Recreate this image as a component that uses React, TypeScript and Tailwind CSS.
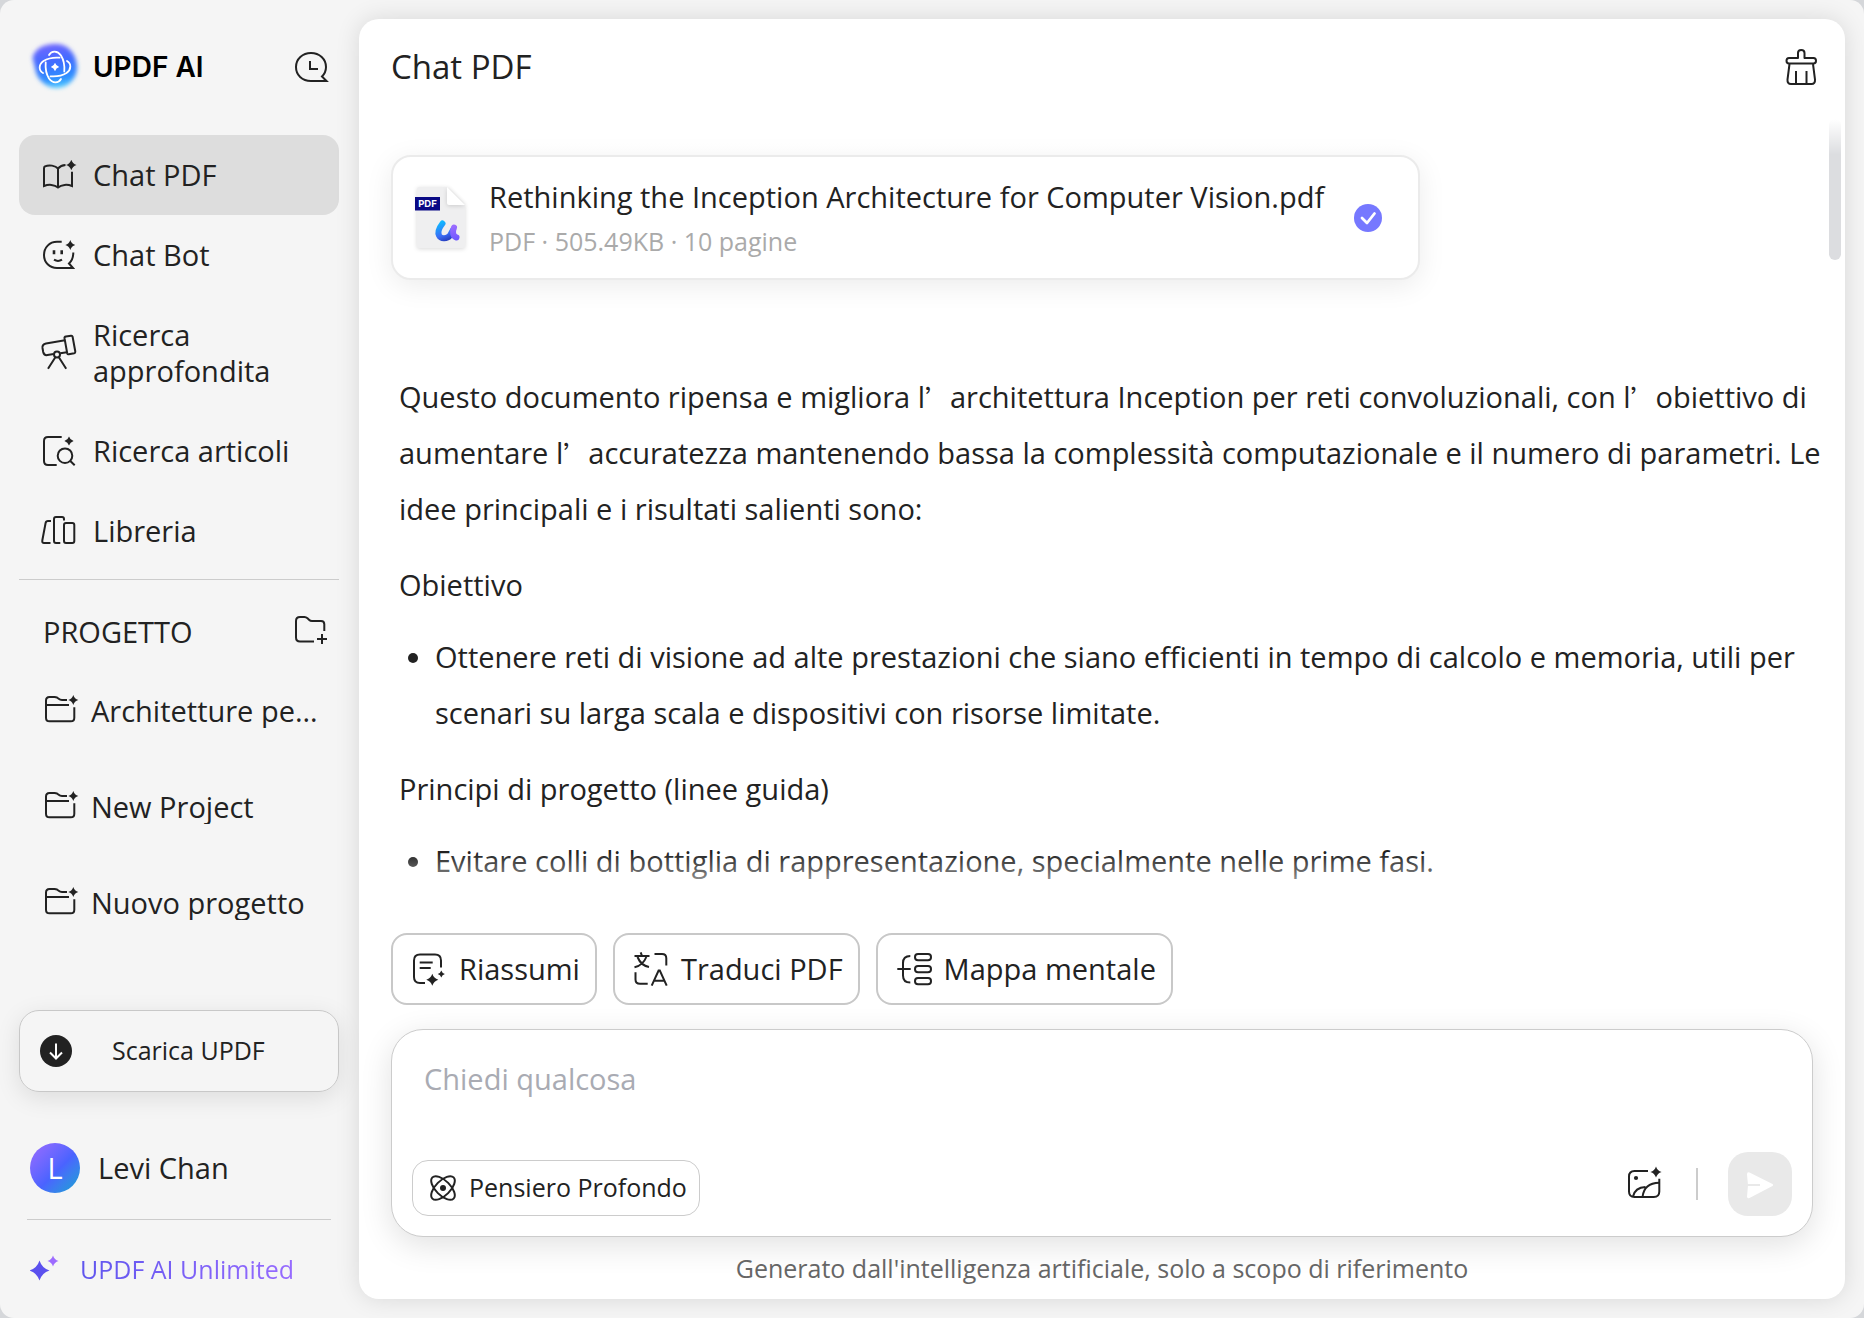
import React, { ReactNode } from 'react';
import clsx from 'clsx';

interface IconProps {
  className?: string;
  children?: ReactNode;
}

// Shared 36px line icon frame
const Icon: React.FC<IconProps> = ({ className, children }) => (
  <svg
    className={clsx('h-9 w-9 shrink-0 overflow-visible', className)}
    viewBox="0 0 36 36"
    fill="none"
    stroke="currentColor"
    strokeWidth={2}
    aria-hidden="true"
  >
    {children}
  </svg>
);

interface SparkProps {
  x: number;
  y: number;
  r: number;
  fill?: string;
}

// Four pointed star used on most of the AI icons
const Spark: React.FC<SparkProps> = ({ x, y, r, fill = 'currentColor' }) => {
  const w = r * 0.24;
  return (
    <path
      d={`M${x} ${y - r}Q${x + w} ${y - w} ${x + r} ${y}Q${x + w} ${y + w} ${x} ${y + r}Q${x - w} ${y + w} ${x - r} ${y}Q${x - w} ${y - w} ${x} ${y - r}Z`}
      fill={fill}
      stroke="none"
    />
  );
};

const LogoIcon = () => (
  <svg className="h-13 w-13 shrink-0 overflow-visible" viewBox="0 0 52 52" fill="none" aria-hidden="true">
    <defs>
      <linearGradient id="logo-fill" x1="20" y1="2" x2="28" y2="50" gradientUnits="userSpaceOnUse">
        <stop offset="0" stopColor="#7466ff" />
        <stop offset="0.4" stopColor="#3f6cff" />
        <stop offset="0.75" stopColor="#2f90ff" />
        <stop offset="1" stopColor="#5fe0ff" />
      </linearGradient>
      <filter id="logo-blur" x="-20%" y="-20%" width="140%" height="140%">
        <feGaussianBlur stdDeviation="2" />
      </filter>
    </defs>
    <path
      d="M4 15C8 5 18 3 27 3C38 3 46 11 47.500 22C49.500 32 45 39 39 43.500C33 48 22 48.500 15.500 43C9 38 7 33 6 27C5 21 3 18 4 15Z"
      fill="url(#logo-fill)"
      filter="url(#logo-blur)"
    />
    <g transform="translate(26 26)" stroke="#fff" strokeWidth="1.8" strokeLinecap="round">
      {[0, 90, 180, 270].map((angle) => (
        <path key={angle} transform={`rotate(${angle})`} d="M-6 -12C-3.500 -16.500 2.500 -16.500 6 -11.500C8.500 -7.500 9.800 -2 9.300 4.500" />
      ))}
    </g>
    <Spark x={26} y={26} r={4.2} fill="#fff" />
  </svg>
);

const HistoryIcon = () => (
  <Icon>
    <path d="M18 32C9 32 3 26 3 18C3 10 9.5 4 18 4C26.5 4 33 10 33 18C33 22 31.5 25 29 27.5L33.5 32H18Z" />
    <path d="M17 12V20H25" />
  </Icon>
);

const BookIcon = () => (
  <Icon>
    <path d="M24.5 8C21 8.2 19 9.2 17 11.5C14.5 8.6 8 7.4 4 9.4Q3 10 3 11.2V29C7.500 27.2 13.500 27.400 17 30.5C20.5 27.4 26.5 27.2 31 29V14.7M17 11.5V30.5" />
    <Spark x={30.3} y={8} r={5.2} />
  </Icon>
);

const BotIcon = () => (
  <Icon>
    <path d="M20.7 4.8H16C8.500 4.800 3 10.500 3 18C3 25.500 8.500 31 16 31H32L28 26.500C30.800 24 32.300 20 32.300 15.500" />
    <path d="M13 13.300V17.300M20.700 13.300V17.300" strokeWidth={2.6} />
    <path d="M13 22.700Q17 25.300 21 22.700" />
    <Spark x={29.3} y={8} r={5} />
  </Icon>
);

const TelescopeIcon = () => (
  <Icon>
    <path d="M24 5.300L5 8.500Q1 9.300 1.500 13L2.200 17Q3 20.700 6.500 20.100L12.700 19M19.300 18.300L26 17.200" />
    <path d="M24.900 1.500L30 .7Q31.300 .5 31.600 1.700L34.300 16.500Q34.500 18 33.200 18.300L27.800 19.300Q26.500 19.500 26.200 18.200L23.500 3.200Q23.300 1.800 24.900 1.500Z" />
    <circle cx="16" cy="19.500" r="3" />
    <path d="M14.200 22.500L7 33.700M18 22.500L25.200 33.700" />
  </Icon>
);

const ArticleSearchIcon = () => (
  <Icon>
    <path d="M20.700 4H7Q3 4 3 8V28Q3 32 7 32H15.700" />
    <circle cx="24" cy="22.700" r="7.300" />
    <path d="M29.300 28L33.700 32.300" />
    <Spark x={28} y={8} r={4.6} />
  </Icon>
);

const LibraryIcon = () => (
  <Icon>
    <path d="M10 8H7Q5 8 4.600 10L1.300 27.500Q1 30 3 30H9.500" />
    <path d="M19.300 30H15Q13 30 13 28V6Q13 4 15 4H21Q23 4 23 6V7.500" />
    <rect x="23" y="10" width="10.300" height="20" rx="2" />
  </Icon>
);

const FolderPlusIcon = () => (
  <Icon>
    <path d="M21 27.500H7Q3 27.500 3 23.500V7Q3 3 7 3H11.500Q13 3 14.500 4.300L16 5.700Q17.300 7 19 7H28Q31.300 7 31.300 10.300V17" />
    <path d="M29 20V30M24 25H34" />
  </Icon>
);

const FolderIcon = () => (
  <Icon>
    <path d="M26 12H3M24 6.900H19Q17 6.900 15.700 5.800L14.300 4.700Q13 3.900 11.500 3.900H6.500Q3 3.900 3 7.500V24.700Q3 28.300 6.500 28.300H27.800Q31.300 28.300 31.300 24.700V14.300" />
    <Spark x={30.3} y={7} r={5} />
  </Icon>
);

const BroomIcon = () => (
  <Icon>
    <path d="M15 9V4Q15 1 18.200 1Q21.500 1 21.500 4V9H30.500Q33 9 33 11.800Q33 14.600 30.500 14.600H6Q3.500 14.600 3.500 11.800Q3.500 9 6 9Z" strokeLinejoin="round" />
    <path d="M6.500 15L4.500 30.500Q4.200 35 8 35H28.500Q32.300 35 32 30.500L30 15M13 22V35M23.500 22V35" />
  </Icon>
);

const SummaryIcon = () => (
  <Icon>
    <path d="M14 32H9Q3 32 3 26V9.500Q3 3.500 9 3.500H24Q30 3.500 30 9.500V16.500" />
    <path d="M8.700 11.500H21.700M8.700 17H19.700" />
    <Spark x={21.3} y={28.7} r={6} />
    <Spark x={30.3} y={23} r={3.6} />
  </Icon>
);

const TranslateIcon = () => (
  <Icon>
    <path d="M1.500 5H16.500M7.700 1.300L9 5M4.500 6Q8 14.500 16 16M13.300 6Q10 14.500 1.500 16.300" />
    <path d="M21.500 3H29Q33.300 3 33.300 7.300V14.500M2.500 21.300V28.500Q2.500 32.800 7 32.800H14.700" />
    <path d="M18.700 34.700L25.600 19.500H26.800L33.700 34.700M21 29.700H31.500" />
  </Icon>
);

const MindMapIcon = () => (
  <Icon>
    <path d="M1.300 18H14.700M14.300 5Q7 5 7 12V24.500Q7 31.500 14.300 31.500" />
    <rect x="19" y="3" width="16" height="6.300" rx="3" />
    <rect x="19" y="15" width="16" height="6.300" rx="3" />
    <rect x="19" y="27" width="16" height="6.300" rx="3" />
  </Icon>
);

const AtomIcon = () => (
  <svg className="h-7 w-7 shrink-0" viewBox="0 0 28 28" fill="none" stroke="currentColor" strokeWidth={2} aria-hidden="true">
    <ellipse cx="14" cy="14" rx="15" ry="7.300" transform="rotate(45 14 14)" />
    <ellipse cx="14" cy="14" rx="15" ry="7.300" transform="rotate(-45 14 14)" />
    <circle cx="14" cy="14" r="3" fill="currentColor" stroke="none" />
  </svg>
);

const ImageIcon = () => (
  <Icon>
    <path d="M21 5H7.500Q2 5 2 10.500V25.500Q2 31 7.500 31H26.800Q32.300 31 32.300 25.500V12.700" />
    <path d="M15.500 31Q17 17 32.300 16.700M6 30.500Q8 21.500 18.500 21" />
    <circle cx="9" cy="12" r="2.100" fill="currentColor" stroke="none" />
    <Spark x={29} y={6} r={5.6} />
  </Icon>
);

const SendIcon = () => (
  <svg className="h-9 w-9" viewBox="0 0 36 36" aria-hidden="true">
    <path d="M7.500 6.500L30.500 18Q32 19 30.500 20L7.500 32Q5 33 5 30.500L6 19L5 8.500Q5 5.500 7.500 6.500Z" fill="#fff" />
    <path d="M5 19H18" stroke="#e9e9e9" strokeWidth="2" />
  </svg>
);

const PdfFileIcon = () => (
  <svg className="h-18 w-14 shrink-0 overflow-visible" viewBox="0 0 56 72" fill="none" aria-hidden="true">
    <defs>
      <linearGradient id="u-left" x1="28" y1="40" x2="36" y2="60" gradientUnits="userSpaceOnUse">
        <stop offset="0" stopColor="#0fb8ff" />
        <stop offset="0.6" stopColor="#3b6df5" />
        <stop offset="1" stopColor="#1f2fae" />
      </linearGradient>
      <linearGradient id="u-right" x1="41" y1="44" x2="45" y2="59" gradientUnits="userSpaceOnUse">
        <stop offset="0" stopColor="#9a6cff" />
        <stop offset="1" stopColor="#6a55ff" />
      </linearGradient>
    </defs>
    <path
      className="drop-shadow-sm"
      d="M6 5H34L52 23V64Q52 66 50 66H6Q4 66 4 64V7Q4 5 6 5Z"
      fill="#efeff0"
    />
    <path className="drop-shadow-sm" d="M34 5L52 23H36Q34 23 34 21Z" fill="#fff" />
    <rect x="2" y="15" width="25" height="13.500" fill="#0a0a85" />
    <text x="14.500" y="25.200" textAnchor="middle" fontSize="9.500" fontWeight="700" fontFamily="Inter, sans-serif" fill="#fff">
      PDF
    </text>
    <path d="M29.500 41.500C26 46 24.500 50.500 26 53.500C28 57.500 34 57 37 53.500L40 48" stroke="url(#u-left)" strokeWidth="6" strokeLinecap="round" />
    <path d="M41 45.500C39 50 40 54.500 43.500 55.500" stroke="url(#u-right)" strokeWidth="6" strokeLinecap="round" />
  </svg>
);

const navItems = [
  { label: 'Chat PDF', icon: <BookIcon />, active: true },
  { label: 'Chat Bot', icon: <BotIcon /> },
  { label: 'Ricerca approfondita', icon: <TelescopeIcon /> },
  { label: 'Ricerca articoli', icon: <ArticleSearchIcon /> },
  { label: 'Libreria', icon: <LibraryIcon /> },
];

const projects = ['Architetture per reti', 'New Project', 'Nuovo progetto'];

const actions = [
  { label: 'Riassumi', icon: <SummaryIcon /> },
  { label: 'Traduci PDF', icon: <TranslateIcon /> },
  { label: 'Mappa mentale', icon: <MindMapIcon /> },
];

// Typographic apostrophe set in the full-width CJK face
const Apostrophe = () => (
  <span className="font-['Noto_Sans_CJK_SC',sans-serif] text-[25px] leading-none">’</span>
);

const Sidebar = () => (
  <aside className="flex w-[359px] shrink-0 flex-col pr-5 pl-[19px]">
    <div className="flex h-[135px] items-center px-[10px] pb-[2px]">
      <LogoIcon />
      <h1 className="ml-3 flex-1 font-['Inter',sans-serif] text-[28px] leading-9 font-semibold text-black">UPDF AI</h1>
      <button type="button" aria-label="Cronologia">
        <HistoryIcon />
      </button>
    </div>

    <nav>
      {navItems.map((item) => (
        <a
          key={item.label}
          href="#"
          className={clsx(
            'flex items-center gap-4 rounded-2xl px-[22px] py-[22px] leading-9',
            item.active && 'bg-[#dddddd]'
          )}
        >
          {item.icon}
          <span>{item.label}</span>
        </a>
      ))}
    </nav>

    <section className="mt-2 border-t border-[#cccccc]">
      <div className="flex h-[83px] items-center justify-between pt-5 pr-[10px] pl-6">
        <h2 className="leading-9">PROGETTO</h2>
        <button type="button" aria-label="Nuovo progetto">
          <FolderPlusIcon />
        </button>
      </div>
      <ul>
        {projects.map((name) => (
          <li key={name}>
            <a href="#" className="flex h-24 items-center gap-3 pr-5 pl-6">
              <FolderIcon />
              <span className="truncate leading-[34px]">{name}</span>
            </a>
          </li>
        ))}
      </ul>
    </section>

    <div className="mt-auto pb-[22px]">
      <button
        type="button"
        className="flex h-[82px] w-full items-center rounded-[20px] border border-[#c8c8c8] pl-5 text-[25px] shadow-[0_6px_24px_rgba(0,0,0,0.1)]"
      >
        <svg className="h-8 w-8" viewBox="0 0 32 32" fill="none" aria-hidden="true">
          <circle cx="16" cy="16" r="16" fill="#222" />
          <path d="M16 8.500V23M10 17.500L16 23.500L22 17.500" stroke="#fff" strokeWidth="2" />
        </svg>
        <span className="ml-10">Scarica UPDF</span>
      </button>

      <div className="mt-[51px] flex items-center pl-[11px]">
        <span className="flex h-[50px] w-[50px] items-center justify-center rounded-full bg-linear-135 from-[#9a6bff] via-[#4a63ff] via-55% to-[#00a3cf] text-white">
          L
        </span>
        <span className="ml-[18px] leading-9">Levi Chan</span>
      </div>

      <a href="#" className="mx-2 mt-[26px] flex h-[77px] items-end border-t border-[#cccccc] pb-[9px] pl-[3px] text-[25px] leading-9">
        <svg className="mb-1 h-8 w-8 shrink-0" viewBox="0 0 32 32" aria-hidden="true">
          <Spark x={9.5} y={19.5} r={10} fill="#5b50ee" />
          <Spark x={23} y={10} r={5.5} fill="#9d6bff" />
        </svg>
        <span className="ml-[18px] bg-linear-to-r from-[#5f55ee] to-[#976bff] bg-clip-text whitespace-nowrap text-transparent">
          UPDF AI Unlimited
        </span>
      </a>
    </div>
  </aside>
);

const FileCard = () => (
  <article className="flex h-[125px] w-fit max-w-full items-center rounded-[20px] border-2 border-[#ebebeb] bg-white pr-9 pl-5 shadow-[0_6px_28px_rgba(0,0,0,0.08)]">
    <PdfFileIcon />
    <div className="ml-5 pt-[2px]">
      <h3 className="leading-11">Rethinking the Inception Architecture for Computer Vision.pdf</h3>
      <p className="text-[25px] leading-11 text-[#aaaaaa]">PDF · 505.49KB · 10 pagine</p>
    </div>
    <svg className="ml-[30px] h-7 w-7 shrink-0" viewBox="0 0 28 28" fill="none" aria-hidden="true">
      <circle cx="14" cy="14" r="14" fill="#7678ff" />
      <path d="M8 14L13 19L20.500 9.500" stroke="#fff" strokeWidth="2.800" strokeLinecap="round" strokeLinejoin="round" />
    </svg>
  </article>
);

const Message = () => (
  <div className="mt-[89px] pl-2 leading-14">
    <p>
      Questo documento ripensa e migliora l<Apostrophe />architettura Inception per reti convoluzionali, con l
      <Apostrophe />obiettivo di aumentare l<Apostrophe />accuratezza mantenendo bassa la complessità computazionale e
      il numero di parametri. Le idee principali e i risultati salienti sono:
    </p>
    <p className="mt-5">Obiettivo</p>
    <ul className="mt-4 list-disc pl-9">
      <li>
        Ottenere reti di visione ad alte prestazioni che siano efficienti in tempo di calcolo e memoria, utili per
        scenari su larga scala e dispositivi con risorse limitate.
      </li>
    </ul>
    <p className="mt-5">Principi di progetto (linee guida)</p>
    <ul className="mt-4 list-disc pl-9">
      <li>Evitare colli di bottiglia di rappresentazione, specialmente nelle prime fasi.</li>
    </ul>
  </div>
);

const Composer = () => (
  <form className="mx-8 rounded-[32px] border border-[#cccccc] bg-white px-5 pt-[27px] pb-5 shadow-[0_8px_32px_rgba(0,0,0,0.12)]">
    <textarea
      aria-label="Chiedi qualcosa"
      placeholder="Chiedi qualcosa"
      className="block h-[95px] w-full resize-none px-3 leading-11 outline-none placeholder:text-[#a9abb3]"
    />
    <div className="flex items-end">
      <button type="button" className="flex h-14 items-center gap-3 rounded-2xl border border-[#cccccc] pr-3 pl-4 text-[25px]">
        <AtomIcon />
        Pensiero Profondo
      </button>
      <div className="ml-auto flex h-16 items-center">
        <button type="button" aria-label="Immagine">
          <ImageIcon />
        </button>
        <span className="ml-[33px] h-8 w-0.5 bg-[#cccccc]" />
        <button
          type="submit"
          aria-label="Invia"
          className="ml-[30px] flex h-16 w-16 items-center justify-center rounded-[20px] bg-[#e9e9e9]"
        >
          <SendIcon />
        </button>
      </div>
    </div>
  </form>
);

const App: React.FC = () => {
  return (
    <div className="h-screen bg-[#d5d7da] font-['Open_Sans',sans-serif] text-[29px] text-[#222222]">
      <div className="flex h-full overflow-hidden rounded-[14px] bg-[#f5f5f5]">
        <Sidebar />
        <main className="my-[19px] mr-[19px] flex min-w-0 flex-1 flex-col rounded-[20px] bg-white shadow-[0_0_24px_rgba(0,0,0,0.12)]">
          <header className="flex h-25 shrink-0 items-center justify-between pr-[26px] pb-1 pl-8">
            <h2 className="text-[33px] leading-11">Chat PDF</h2>
            <button type="button" aria-label="Cancella chat">
              <BroomIcon />
            </button>
          </header>

          <div className="relative min-h-0 flex-1 overflow-hidden pt-9 pr-4 pl-8">
            <FileCard />
            <Message />
            <div className="absolute top-0 right-1 h-[141px] w-3 rounded-full bg-[#dcdde0]" />
            <div className="absolute inset-x-0 top-0 h-9 bg-linear-to-b from-white to-transparent" />
            <div className="absolute inset-x-0 bottom-0 h-14 bg-linear-to-t from-white to-transparent" />
          </div>

          <div className="flex gap-4 px-8 py-6">
            {actions.map((action) => (
              <button
                key={action.label}
                type="button"
                className="flex h-18 items-center gap-3 rounded-2xl border-2 border-[#c8c8c8] pr-[15px] pl-[18px] whitespace-nowrap"
              >
                {action.icon}
                {action.label}
              </button>
            ))}
          </div>
          <Composer />
          <footer className="py-[13px] text-center text-[25px] leading-9 text-[#666666]">
            Generato dall'intelligenza artificiale, solo a scopo di riferimento
          </footer>
        </main>
      </div>
    </div>
  );
};

export default App;
